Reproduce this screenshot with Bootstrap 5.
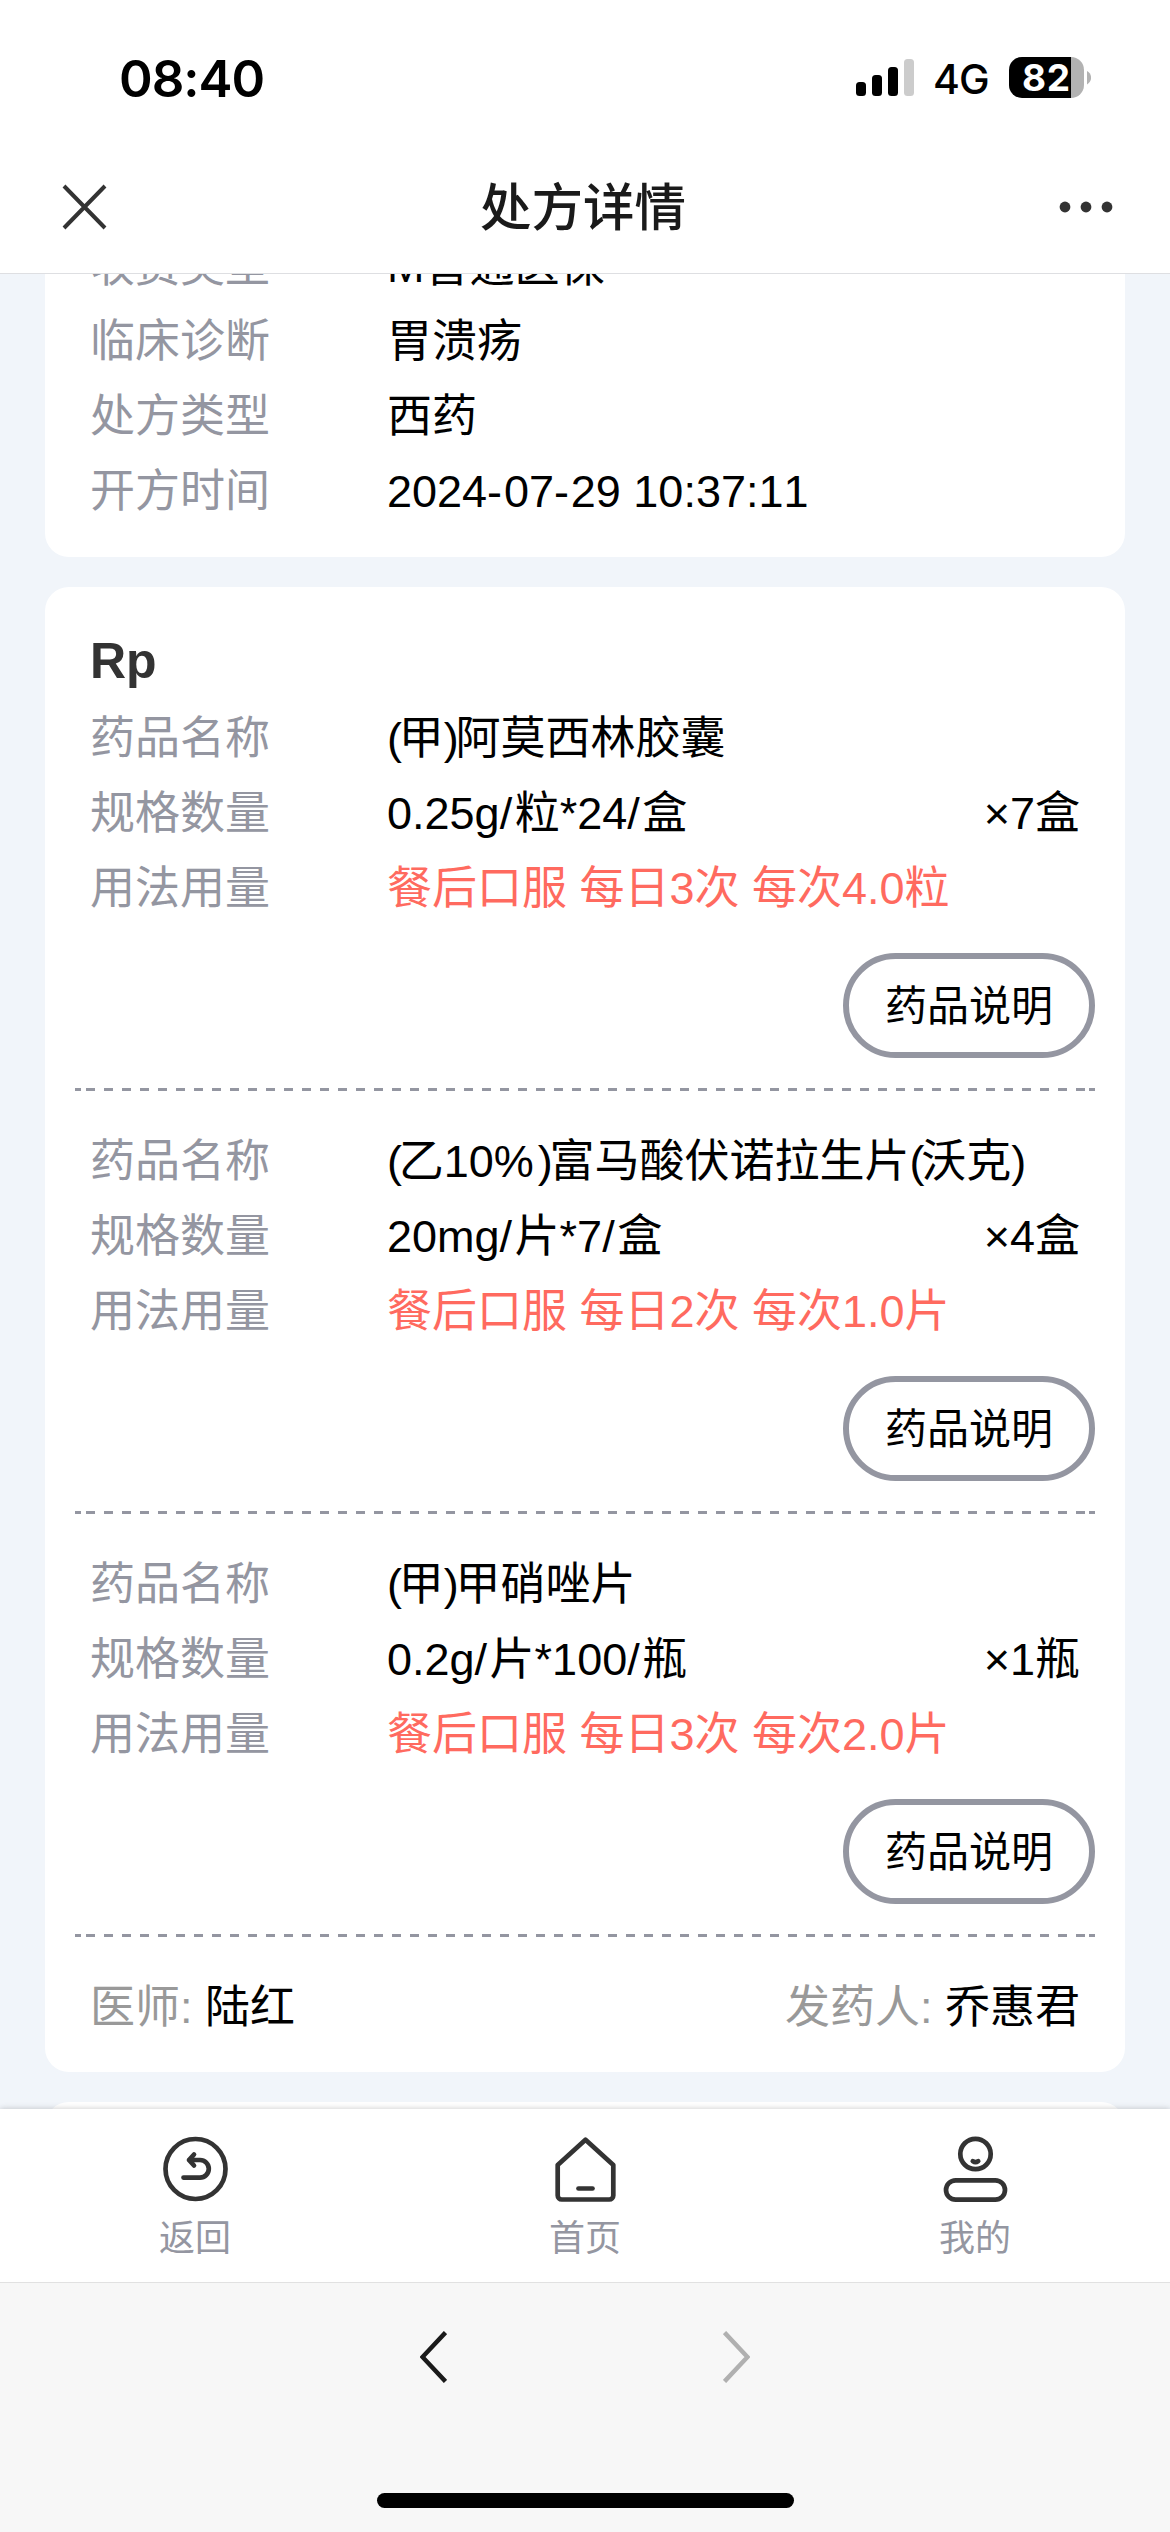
<!DOCTYPE html>
<html lang="zh-CN">
<head>
<meta charset="utf-8">
<meta name="viewport" content="width=device-width, initial-scale=1">
<title>处方详情</title>
<link href="https://cdn.jsdelivr.net/npm/bootstrap@5.3.0/dist/css/bootstrap.min.css" rel="stylesheet">
<style>
  :root { --ink: #000; --muted: #9496a1; --page: #f1f5fa; }
  body { font-family: "Liberation Sans", "Noto Sans CJK SC", sans-serif; font-size: 45px; line-height: 75px; color: var(--ink); background: var(--page); font-kerning: none; }
  .screen { width: 1170px; height: 2532px; }
  .status-bar { height: 141px; padding: 0 79px 0 119px; font-family: Inter, sans-serif; line-height: 1; }
  .clock { font-size: 51px; font-weight: 600; letter-spacing: -1px; padding-top: 53px; }
  .network { font-size: 41px; font-weight: 500; letter-spacing: -1px; }
  .nav-head { height: 132px; padding: 0 55px 0 60px; }
  .page-title { font-size: 51.5px; font-weight: 500; color: #1a1a1a; padding: 2px 3px 0 0; }
  .head-wrap { border-bottom: 1px solid #dedfe2; height: 274px; }
  .scroll-area { height: 1835px; padding: 0 45px; }
  .sheet { background: #fff; border: 0; border-radius: 24px; }
  .sheet-info { margin-top: -60px; padding: 13px 45px 30px; height: 343px; flex: none; }
  .sheet-rp { margin-top: 30px; padding: 37px 30px 29px; flex: none; }
  .sheet-next { margin-top: 30px; height: 60px; flex: none; }
  .line { height: 75px; white-space: nowrap; padding-top: 2px; }
  .line-inset { padding-left: 15px; padding-right: 15px; }
  .key { width: 297px; color: var(--muted); flex: none; }
  .usage { color: #ff6a5f; }
  .paren { letter-spacing: -3.3px; }
  .slash { letter-spacing: 2.5px; }
  .hyphen { letter-spacing: 1.8px; }
  .percent { letter-spacing: 4px; }
  .rp-title { font-size: 50px; font-weight: 700; color: #333; padding-top: 0; }
  .btn-doc { --bs-btn-color: #000; width: 252px; height: 105px; border: 6px solid var(--muted); border-radius: 53px; font-size: 42px; line-height: 1; padding: 3px 0 0; margin: 29px 0 30px; }
  .dashes { height: 3px; margin-bottom: 31px;
    background:
      linear-gradient(var(--muted), var(--muted)) 0 0 / 6px 3px no-repeat,
      linear-gradient(var(--muted), var(--muted)) 100% 0 / 6px 3px no-repeat,
      repeating-linear-gradient(90deg, var(--muted) 0 9px, transparent 9px 18px) 11px 0 / 999px 3px no-repeat; }
  .signer { color: #999; }
  .tab-bar { height: 173px; background: #fff; box-shadow: 0 0 6px rgba(0,0,0,.22); clip-path: inset(-10px 0 0 0); z-index: 1; }
  .tab-link { color: var(--muted); font-size: 36px; line-height: 50px; padding-top: 25px; text-decoration: none; }
  .tab-link svg { margin-bottom: 10px; }
  .browser-bar { height: 250px; background: #f7f7f7; border-top: 1px solid #e1e1e1; }
  .chevrons { padding-top: 48px; gap: 276px; }
  .home-bar { width: 417px; height: 15px; border-radius: 8px; background: #000; margin-top: 110px; }
  svg { display: block; }
</style>
</head>
<body>
<div class="screen d-flex flex-column overflow-hidden mx-auto">
  <header class="head-wrap bg-white flex-shrink-0">
    <div class="status-bar d-flex justify-content-between">
      <span class="clock">08:40</span>
      <svg width="236" height="110" viewBox="855 0 236 110">
        <rect x="856" y="82" width="10" height="14" rx="3.5"/>
        <rect x="872" y="75" width="10" height="21" rx="3.5"/>
        <rect x="888" y="67" width="10" height="29" rx="3.5"/>
        <rect x="904" y="59" width="10" height="37" rx="3.5" fill="#ccc"/>
        <text x="933" y="94" class="network">4G</text>
        <path d="M1022 57h36v41h-36a13 13 0 0 1-13-13v-15a13 13 0 0 1 13-13z"/>
        <path d="M1058 57h13v41h-13z"/>
        <path d="M1071 57a13 13 0 0 1 13 13v15a13 13 0 0 1-13 13z" fill="#b2b2b2"/>
        <path d="M1087 71c5.500 3 5.500 10.500 0 13.500z" fill="#b2b2b2"/>
        <text x="1022" y="91" fill="#fff" font-size="37" font-weight="700" textLength="48">82</text>
      </svg>
    </div>
    <nav class="nav-head d-flex align-items-center justify-content-between">
      <svg width="50" height="50" viewBox="0 0 50 50" fill="none" stroke="#333" stroke-width="4"><path d="M4 4l41 42M45 4L4 46"/></svg>
      <span class="page-title">处方详情</span>
      <svg width="56" height="14" viewBox="0 0 56 14" fill="#333"><circle cx="6" cy="7" r="5.400"/><circle cx="27" cy="7" r="5.400"/><circle cx="48" cy="7" r="5.400"/></svg>
    </nav>
  </header>

  <main class="scroll-area d-flex flex-column overflow-hidden flex-shrink-0">
    <section class="card sheet sheet-info">
      <div class="line d-flex"><span class="key">收费类型</span><span>M普通医保</span></div>
      <div class="line d-flex"><span class="key">临床诊断</span><span>胃溃疡</span></div>
      <div class="line d-flex"><span class="key">处方类型</span><span>西药</span></div>
      <div class="line d-flex"><span class="key">开方时间</span><span>2024<span class="hyphen">-</span>07<span class="hyphen">-</span>29 10:37:11</span></div>
    </section>

    <section class="card sheet sheet-rp">
      <div class="line line-inset rp-title">Rp</div>

      <article class="d-flex flex-column">
        <div class="line line-inset d-flex"><span class="key">药品名称</span><span><span class="paren">(</span>甲<span class="paren">)</span>阿莫西林胶囊</span></div>
        <div class="line line-inset d-flex"><span class="key">规格数量</span><span>0.25g<span class="slash">/</span>粒*24<span class="slash">/</span>盒</span><span class="ms-auto">×7盒</span></div>
        <div class="line line-inset d-flex"><span class="key">用法用量</span><span class="usage">餐后口服 每日3次 每次4.0粒</span></div>
        <button type="button" class="btn btn-doc align-self-end">药品说明</button>
        <div class="dashes"></div>
      </article>

      <article class="d-flex flex-column">
        <div class="line line-inset d-flex"><span class="key">药品名称</span><span><span class="paren">(</span>乙10<span class="percent">%</span><span class="paren">)</span>富马酸伏诺拉生片<span class="paren">(</span>沃克<span class="paren">)</span></span></div>
        <div class="line line-inset d-flex"><span class="key">规格数量</span><span>20mg<span class="slash">/</span>片*7<span class="slash">/</span>盒</span><span class="ms-auto">×4盒</span></div>
        <div class="line line-inset d-flex"><span class="key">用法用量</span><span class="usage">餐后口服 每日2次 每次1.0片</span></div>
        <button type="button" class="btn btn-doc align-self-end">药品说明</button>
        <div class="dashes"></div>
      </article>

      <article class="d-flex flex-column">
        <div class="line line-inset d-flex"><span class="key">药品名称</span><span><span class="paren">(</span>甲<span class="paren">)</span>甲硝唑片</span></div>
        <div class="line line-inset d-flex"><span class="key">规格数量</span><span>0.2g<span class="slash">/</span>片*100<span class="slash">/</span>瓶</span><span class="ms-auto">×1瓶</span></div>
        <div class="line line-inset d-flex"><span class="key">用法用量</span><span class="usage">餐后口服 每日3次 每次2.0片</span></div>
        <button type="button" class="btn btn-doc align-self-end">药品说明</button>
        <div class="dashes"></div>
      </article>

      <div class="line line-inset d-flex justify-content-between">
        <span><span class="signer">医师:</span> 陆红</span>
        <span><span class="signer">发药人:</span> 乔惠君</span>
      </div>
    </section>

    <section class="card sheet sheet-next"></section>
  </main>

  <nav class="tab-bar d-flex position-relative flex-shrink-0">
    <a class="tab-link d-flex flex-column align-items-center col-4" href="#">
      <svg width="68" height="70" viewBox="0 0 68 70" fill="none" stroke="#333" stroke-width="4.700" stroke-linecap="round" stroke-linejoin="round"><circle cx="34.500" cy="35" r="30"/><path d="M22.500 43.600h16.500a8.800 8.800 0 0 0 0-17.600H28M33 20.500L28 26l5 5.500"/></svg>
      <span>返回</span>
    </a>
    <a class="tab-link d-flex flex-column align-items-center col-4" href="#">
      <svg width="68" height="70" viewBox="0 0 68 70" fill="none" stroke="#333" stroke-width="4.700" stroke-linecap="round" stroke-linejoin="round"><path d="M34.500 5.800L62.300 31V61.500a4 4 0 0 1-4 4H10.700a4 4 0 0 1-4-4V31z"/><path d="M27.500 54.500h14"/></svg>
      <span>首页</span>
    </a>
    <a class="tab-link d-flex flex-column align-items-center col-4" href="#">
      <svg width="68" height="70" viewBox="0 0 68 70" fill="none" stroke="#333" stroke-width="4.700" stroke-linecap="round" stroke-linejoin="round"><circle cx="34.500" cy="20" r="15.200"/><path d="M31.800 27.200q2.700 2 5.400 0"/><rect x="5" y="46.300" width="59" height="19.400" rx="9.700"/></svg>
      <span>我的</span>
    </a>
  </nav>

  <footer class="browser-bar d-flex flex-column align-items-center flex-shrink-0">
    <div class="chevrons d-flex">
      <svg width="27" height="52" viewBox="0 0 27 52" fill="none" stroke="#1a1a1a" stroke-width="4.500"><path d="M25.500 1.500L2.500 26l23 24.500"/></svg>
      <svg width="27" height="52" viewBox="0 0 27 52" fill="none" stroke="#b0b0b0" stroke-width="4.500"><path d="M1.500 1.500L24.500 26l-23 24.500"/></svg>
    </div>
    <div class="home-bar"></div>
  </footer>
</div>
<script src="https://cdn.jsdelivr.net/npm/bootstrap@5.3.0/dist/js/bootstrap.bundle.min.js"></script>
</body>
</html>
